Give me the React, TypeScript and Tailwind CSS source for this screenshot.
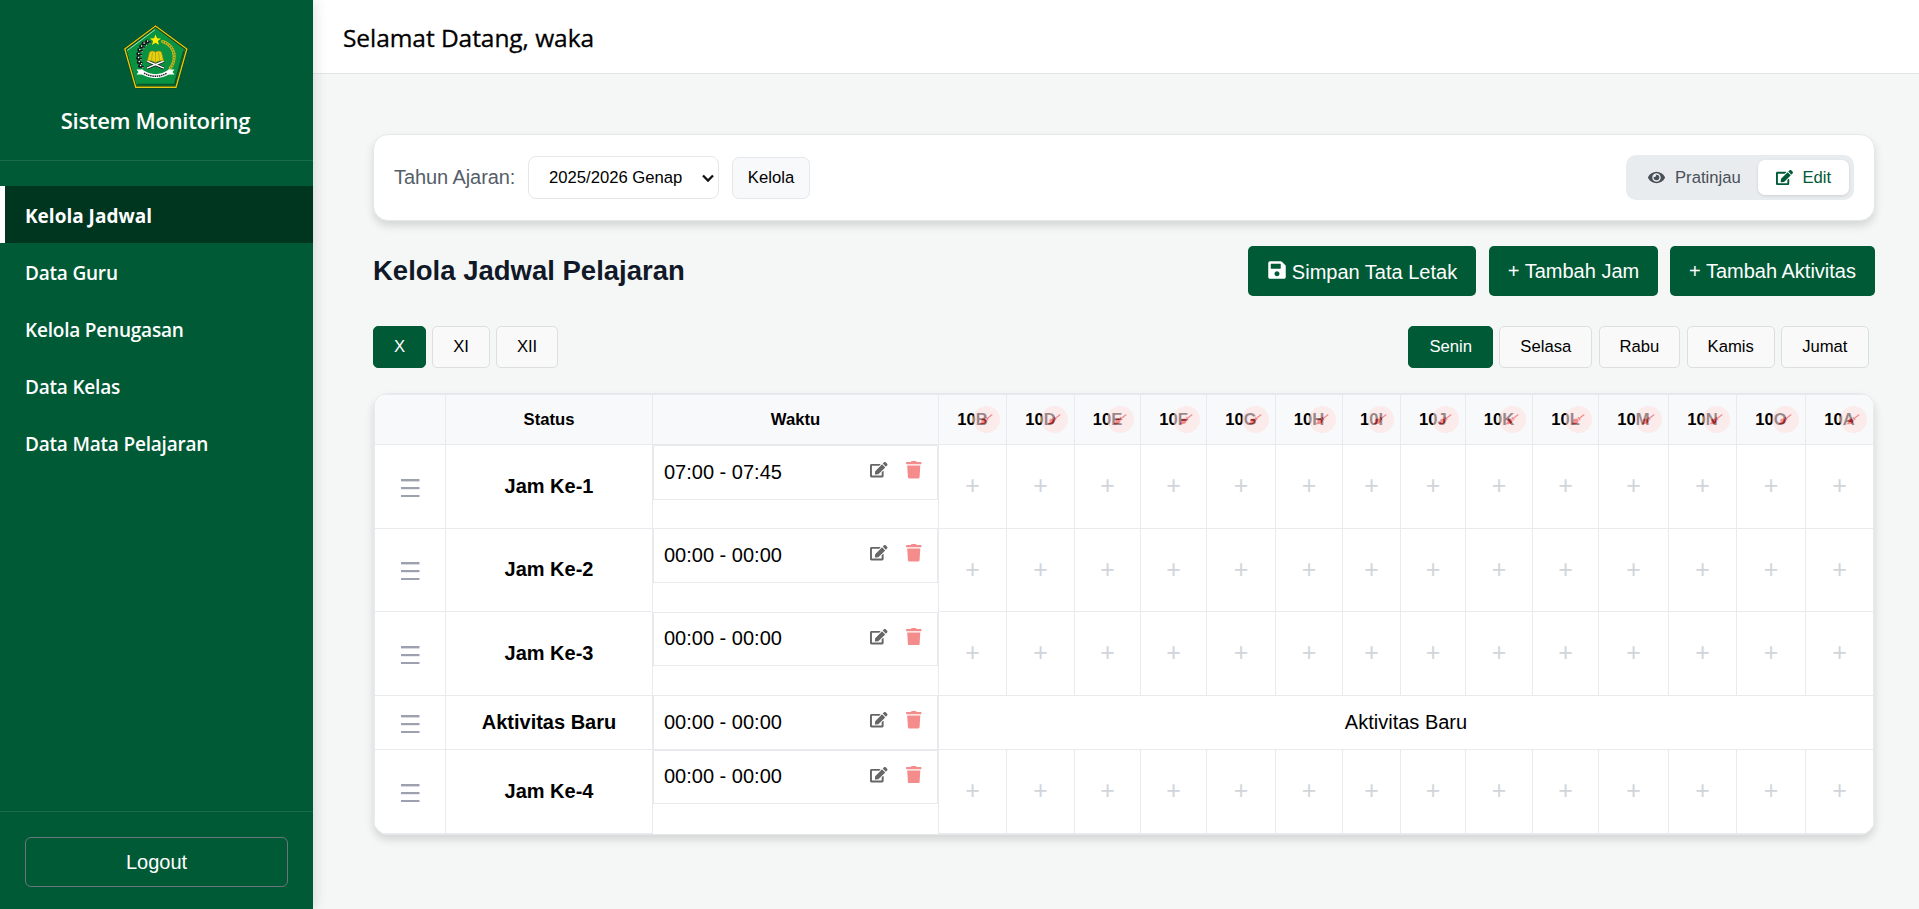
import { FaBroom, FaEdit, FaEye, FaSave, FaTrash } from "react-icons/fa";

const menu = ["Kelola Jadwal", "Data Guru", "Kelola Penugasan", "Data Kelas", "Data Mata Pelajaran"];
const grades = ["X", "XI", "XII"];
const days = ["Senin", "Selasa", "Rabu", "Kamis", "Jumat"];
const classes = ["10B", "10D", "10E", "10F", "10G", "10H", "10I", "10J", "10K", "10L", "10M", "10N", "10O", "10A"];
const columns = [71, 207, 286, 68, 68, 66, 66, 69, 67, 58, 65, 67, 66, 70, 68, 69, 68];

const rows = [
  { label: "Jam Ke-1", time: "07:00 - 07:45", height: "h-[84px]", box: "h-[55px]" },
  { label: "Jam Ke-2", time: "00:00 - 00:00", height: "h-[83px]", box: "h-[55px] -mt-px" },
  { label: "Jam Ke-3", time: "00:00 - 00:00", height: "h-[84px]", box: "h-[54px]" },
  { label: "Aktivitas Baru", time: "00:00 - 00:00", height: "h-[54px]", box: "h-[55px] -mt-px", activity: true },
  { label: "Jam Ke-4", time: "00:00 - 00:00", height: "h-[84px]", box: "h-[54px]" },
];

function Emblem() {
  const left = [[24, 16.5], [20.5, 18.5], [18, 21.5], [16.2, 25], [15.2, 29], [15, 33], [15.6, 37], [17, 41]];
  return (
    <svg className="mr-px h-16 w-16" viewBox="0 0 64 64" fill="none">
      <path d="M31.5 1.2 62.6 24.2 52 62 11.7 62 1 24.2Z" fill="#0a9243" stroke="#1d2a08" strokeWidth="2.4" />
      <path d="M31.5 1 62.8 24 52 62.2 11.7 62.2 .8 24Z" stroke="#dccb12" strokeWidth="1.4" />
      <path d="M3.2 25.5 31 4.8" stroke="#9fe0b4" strokeWidth="1" />
      <path d="M60 25.5 50.5 59.6H13" stroke="#04562a" strokeWidth="1.6" />
      <path d="m31.500 9.600 1.500 3.700 4 .2-3.100 2.500 1.100 3.900-3.500-2.200-3.500 2.200 1.100-3.900-3.100-2.500 4-.2z" fill="#ffee00" />
      {left.map(([x, y], i) => (
        <g key={i}>
          <circle cx={x - 0.9} cy={y} r="2" fill="#111" />
          <circle cx={x + 1.6} cy={y + 1} r="1.3" fill="#111" />
          <circle cx={x - 0.4} cy={y - 0.4} r=".8" fill="#fff" />
          <circle cx={x + 1.9} cy={y + 1.6} r=".6" fill="#fff" />
        </g>
      ))}
      <path d="M38.5 16.5C46 18.5 50.3 25 50.2 31.5 50.1 36 48.8 40 46.3 43" stroke="#c9b71a" strokeWidth="3" strokeLinecap="round" />
      <path d="M38.5 16.5C46 18.5 50.3 25 50.2 31.5 50.1 36 48.8 40 46.3 43" stroke="#36802a" strokeWidth="1.1" strokeDasharray="1.3 1.3" />
      <path d="m23 36 17 7.2M40 36l-17 7.2" stroke="#111" strokeWidth="2.8" />
      <path d="m23 36 17 7.2M40 36l-17 7.2" stroke="#fff" strokeWidth="1.4" />
      <path d="M25.5 27c2.300-1.500 4.300-1.200 6 .3 1.700-1.500 3.700-1.800 6-.3l2.200 9c-3-.8-5.700-.3-8.200 1.700-2.500-2-5.200-2.500-8.200-1.700z" fill="#e6d012" stroke="#8f8208" strokeWidth=".6" />
      <path d="M31.500 28v9M28.500 27.500l-1 7.500M34.500 27.500l1 7.500" stroke="#a99a0c" strokeWidth=".7" />
      <path d="M12.500 44.500h6v5h-6l2-2.500zM50.500 44.500h-6v5h6l-2-2.500z" fill="#fff" />
      <path d="M16.500 46c9.500 6.700 20.500 6.700 30 0" stroke="#fff" strokeWidth="4.200" />
      <path d="M20 48.200c7.500 4 15.500 4 23 0" stroke="#222" strokeWidth="1.500" strokeDasharray="1.500 .7" />
    </svg>
  );
}

function Sidebar() {
  return (
    <aside className="z-10 flex h-full w-[313px] shrink-0 flex-col bg-[#005a36] text-white shadow-[2px_0_12px_rgba(0,0,0,0.12)]">
      <div className="flex h-[161px] flex-col items-center border-b border-white/10 pt-[25px]">
        <Emblem />
        <h1 className="mt-4 mr-0.5 font-['Open_Sans',sans-serif] text-[22px] leading-[30px] font-semibold tracking-[-0.32px]">Sistem Monitoring</h1>
      </div>
      <nav className="flex flex-1 flex-col pt-[25px] font-['Open_Sans',sans-serif] text-[19px]">
        {menu.map((item, i) => (
          <a
            key={item}
            className={
              i === 0
                ? "flex h-[57px] items-center border-l-[5px] border-white bg-[#003620] pt-1 pl-5 font-bold"
                : "flex h-[57px] items-center border-l-[5px] border-transparent pt-1 pl-5 font-semibold tracking-[-0.2px]"
            }
          >
            {item}
          </a>
        ))}
      </nav>
      <div className="border-t border-white/10 px-[25px] pt-[25px] pb-[22px]">
        <button className="h-[50px] w-full rounded-md border border-[#6c757d] text-xl">Logout</button>
      </div>
    </aside>
  );
}

function Tab({ label, active }: { label: string; active: boolean }) {
  return (
    <button
      className={
        active
          ? "h-[42px] rounded-[5px] border border-[#005a36] bg-[#005a36] px-5 pb-0.5 text-white"
          : "h-[42px] rounded-[5px] border border-[#dcdfe0] bg-[#f9f9f9] px-5 pb-0.5 text-black"
      }
    >
      {label}
    </button>
  );
}

function DragHandle() {
  return (
    <svg className="mx-auto mt-0.5 h-[18px] w-[19px]" viewBox="0 0 19 18" fill="#9ca1b0">
      <rect y="0" width="18.500" height="2.400" />
      <rect y="8" width="18.500" height="2.200" />
      <rect y="16" width="18.500" height="2" />
    </svg>
  );
}

function Schedule() {
  return (
    <div className="overflow-hidden rounded-[15px] border border-[#e5e7eb] bg-white shadow-[0_5px_8px_rgba(0,0,0,0.13)]">
      <table className="w-[1500px] table-fixed border-separate border-spacing-0 border-t border-l border-[#e8eaee]">
        <colgroup>
          {columns.map((width, i) => (
            <col key={i} style={{ width }} />
          ))}
        </colgroup>
        <thead>
          <tr className="h-[50px] bg-[#f8f9fb] text-[16.67px]">
            {["", "Status", "Waktu"].map((title) => (
              <th key={title} className="border-r border-b border-[#e8eaee] p-0 font-bold">{title}</th>
            ))}
            {classes.map((name) => (
              <th key={name} className="relative border-r border-b border-[#e8eaee] p-0 font-bold">
                {name}
                <span className="absolute top-[11px] right-[6px] flex h-[27px] w-[27px] items-center justify-center rounded-full bg-[#fee2e2] text-[12.5px] text-[#ef4444] opacity-60">
                  <FaBroom />
                </span>
              </th>
            ))}
          </tr>
        </thead>
        <tbody className="text-xl text-black">
          {rows.map((row) => (
            <tr key={row.label} className={row.height}>
              <td className="border-r border-b border-[#e8eaee] p-0"><DragHandle /></td>
              <td className="border-r border-b border-[#e8eaee] p-0 pb-0.5 text-center font-bold">{row.label}</td>
              <td className="border-r border-[#e8eaee] p-0 align-top">
                <div className={`flex items-center border border-[#e8eaee] pr-[15px] pb-0.5 pl-2.5 ${row.box}`}>
                  <span className="flex-1">{row.time}</span>
                  <FaEdit className="mr-[17px] mb-[3px] size-[17.5px] text-[#666]" />
                  <FaTrash className="mb-[3px] size-[17.5px] text-[#f58c8c]" />
                </div>
              </td>
              {row.activity ? (
                <td colSpan={14} className="border-r border-b border-[#e8eaee] p-0 pb-0.5 text-center">Aktivitas Baru</td>
              ) : (
                classes.map((name) => (
                  <td key={name} className="border-r border-b border-[#e8eaee] p-0 pb-0.5 text-center text-[25px] leading-none text-[#d1d5db]">+</td>
                ))
              )}
            </tr>
          ))}
        </tbody>
      </table>
    </div>
  );
}

export default function App() {
  return (
    <div className="flex h-[909px] w-[1919px] overflow-hidden bg-[#f4f7f6] font-['Liberation_Sans',Arial,sans-serif] text-black">
      <Sidebar />
      <main className="flex flex-1 flex-col">
        <header className="flex h-[74px] items-center border-b border-[#e2e4e6] bg-white pt-[3px] pl-[30px] font-['Open_Sans',sans-serif] text-[24.500px] font-medium tracking-[-0.06px] [-webkit-text-stroke:0.3px]">
          Selamat Datang, waka
        </header>
        <div className="flex flex-col pt-[60px] pr-[45px] pl-[60px]">
          <section className="flex h-[87px] items-center justify-between rounded-[15px] border border-[#e5e7eb] bg-white px-5 shadow-[0_5px_8px_rgba(0,0,0,0.13)]">
            <div className="flex items-center">
              <span className="w-[134px] pb-0.5 text-xl tracking-[-0.08px] text-[#555e69]">Tahun Ajaran:</span>
              <div className="flex h-[43px] w-[191px] items-center justify-between rounded-lg border border-[#e5e7eb] bg-white pr-1 pl-5 text-[16.67px]">
                2025/2026 Genap
                <svg className="h-3 w-3" viewBox="0 0 12 12" fill="none" stroke="#111" strokeWidth="2.300">
                  <path d="m1 3.500 5 5 5-5" />
                </svg>
              </div>
              <button className="ml-[13px] h-[42px] w-[78px] rounded-[7px] border border-[#e5e7eb] bg-[#f8f9fb] text-[16.67px]">Kelola</button>
            </div>
            <div className="flex h-[45px] w-[228px] items-center rounded-[10px] bg-[#e9ecef] pr-[5px] pl-[22px] text-[16.67px] text-[#495057]">
              <FaEye className="size-[17px]" />
              <span className="ml-2.5 flex-1">Pratinjau</span>
              <span className="flex h-[35px] w-[91px] items-center rounded-[7px] bg-white pl-[17.5px] text-[#005a36] shadow-[0_1px_3px_rgba(0,0,0,0.12)]">
                <FaEdit className="mr-2.5 size-[17px]" />
                Edit
              </span>
            </div>
          </section>
          <div className="mt-[25px] flex h-[50px] items-center justify-between">
            <h2 className="text-[27.500px] leading-none font-bold text-[#111827]">Kelola Jadwal Pelajaran</h2>
            <div className="flex gap-3 text-xl text-white">
              <button className="mr-px flex h-[50px] w-[228px] items-center justify-center rounded-[5px] bg-[#005a36] pt-0.5">
                <FaSave className="mr-[5px] mb-[5px] size-5" />
                Simpan Tata Letak
              </button>
              <button className="h-[50px] w-[169px] rounded-[5px] bg-[#005a36]">+ Tambah Jam</button>
              <button className="h-[50px] w-[205px] rounded-[5px] bg-[#005a36]">+ Tambah Aktivitas</button>
            </div>
          </div>
          <div className="mt-[30px] mb-[25px] flex justify-between pr-[6.500px] text-[16.67px]">
            <div className="flex gap-1.5">{grades.map((grade, i) => <Tab key={grade} label={grade} active={i === 0} />)}</div>
            <div className="flex gap-[6.25px]">{days.map((day, i) => <Tab key={day} label={day} active={i === 0} />)}</div>
          </div>
          <Schedule />
        </div>
      </main>
    </div>
  );
}
